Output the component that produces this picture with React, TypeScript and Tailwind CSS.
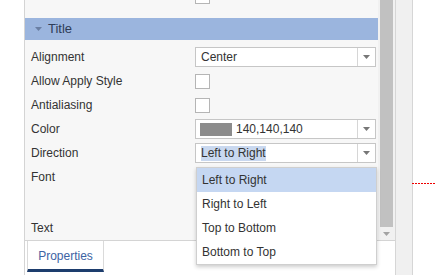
import React from 'react';

const Caret: React.FC = () => (
  <svg width="7" height="4" viewBox="0 0 7 4">
    <path d="M0 0 L7 0 L3.5 4 Z" fill="#777" />
  </svg>
);

const Select: React.FC<{ children: React.ReactNode }> = ({ children }) => (
  <div className="flex h-[20px] w-[181px] items-stretch border border-[#c6c6c6] bg-white">
    <div className="flex flex-1 items-center overflow-hidden pl-[5px] text-[12px] text-[#333]">{children}</div>
    <div className="flex w-[18px] items-center justify-center border-l border-[#d6d6d6]">
      <Caret />
    </div>
  </div>
);

const Checkbox: React.FC<{ className?: string }> = ({ className = '' }) => (
  <div className={`h-[15px] w-[15px] border border-[#b5b5b5] bg-white ${className}`} />
);

const Row: React.FC<{ label: string; children?: React.ReactNode }> = ({ label, children }) => (
  <div className="flex h-[24px] items-center">
    <div className="w-[164px] pl-[6px] text-[12px] text-[#333]">{label}</div>
    <div className="flex items-center pl-[6px]">{children}</div>
  </div>
);

const App: React.FC = () => {
  const options = ['Left to Right', 'Right to Left', 'Top to Bottom', 'Bottom to Top'];

  return (
    <div className="relative flex h-[275px] w-[436px] overflow-hidden bg-white font-['Liberation_Sans',Arial,sans-serif]">
      {/* left gutter */}
      <div className="w-[24px] shrink-0" />

      {/* property panel */}
      <div className="flex w-[371px] shrink-0 flex-col border-l border-[#d4d4d4]">
        <div className="flex h-[241px] border-b border-[#d4d4d4]">
          <div className="w-[353px] bg-[#f7f7f7]">
            {/* cut-off row above */}
            <div className="flex h-[18px] items-start overflow-hidden">
              <Checkbox className="ml-[170px] -mt-[11px]" />
            </div>

            {/* section header */}
            <div className="flex h-[22px] items-center gap-[6px] bg-[#9bb5de] pl-[10px] text-[13px] text-[#2f3d57]">
              <svg width="7" height="4" viewBox="0 0 7 4">
                <path d="M0 0 L7 0 L3.5 4 Z" fill="#6a7fa3" />
              </svg>
              <span>Title</span>
            </div>

            <div className="h-[5px]" />
            <Row label="Alignment">
              <Select>Center</Select>
            </Row>
            <Row label="Allow Apply Style">
              <Checkbox />
            </Row>
            <Row label="Antialiasing">
              <Checkbox />
            </Row>
            <Row label="Color">
              <Select>
                <span className="mr-[4px] -ml-[1px] h-[13px] w-[32px] bg-[#8c8c8c]" />
                140,140,140
              </Select>
            </Row>
            <Row label="Direction">
              <Select>
                <span className="bg-[#c9d8ef] leading-[15px]">Left to Right</span>
              </Select>
            </Row>
            <div className="h-[51px]">
              <div className="flex h-[24px] items-center pl-[6px] text-[12px] text-[#333]">Font</div>
            </div>
            <Row label="Text" />
          </div>

          {/* scrollbar */}
          <div className="flex w-[17px] flex-col bg-[#f1f1f1]">
            <div className="mx-[2px] h-[227px] bg-[#c1c1c1]" />
            <div className="flex flex-1 items-center justify-center">
              <svg width="7" height="4" viewBox="0 0 7 4">
                <path d="M0 0 L7 0 L3.5 4 Z" fill="#a3a3a3" />
              </svg>
            </div>
          </div>
        </div>

        {/* tabs */}
        <div className="flex flex-1 bg-white pl-[2px]">
          <div className="flex h-[31px] w-[77px] items-center justify-center border-x border-b-[3px] border-x-[#dadada] border-b-[#1d3d6d] pt-[2px] text-[12px] text-[#3d63a3]">
            Properties
          </div>
        </div>
      </div>

      {/* side strip */}
      <div className="w-[18px] shrink-0 border-x border-[#d6d6d6] bg-[#f0f0f0]" />

      {/* canvas */}
      <div className="-ml-[1px] flex-1 pt-[183px]">
        <div className="h-[1px] bg-[repeating-linear-gradient(90deg,#ee0000_0px,#ee0000_2px,transparent_2px,transparent_3px)]" />
      </div>

      {/* open dropdown list */}
      <div className="absolute left-[196px] top-[167px] w-[181px] border border-[#cfcfcf] bg-white shadow-[0_2px_4px_rgba(0,0,0,0.2)]">
        {options.map((o, i) => (
          <div
            key={o}
            className={`flex h-[24px] items-center pl-[5px] text-[12px] text-[#333] ${i === 0 ? 'bg-[#c5d7f2]' : ''}`}
          >
            {o}
          </div>
        ))}
      </div>
    </div>
  );
};

export default App;
